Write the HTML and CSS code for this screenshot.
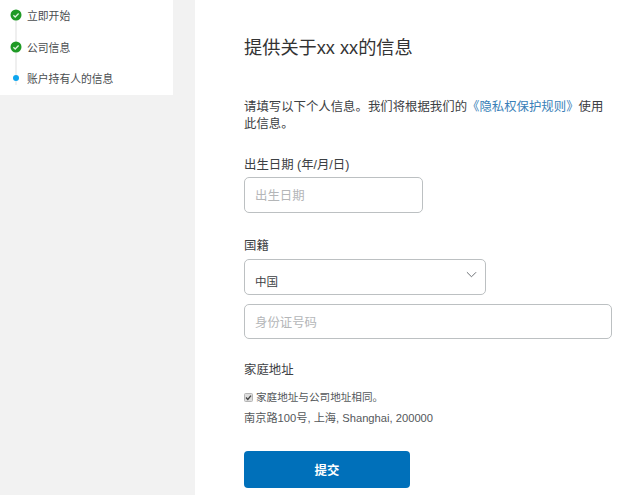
FILE: index.html
```html
<!DOCTYPE html>
<html lang="zh">
<head>
<meta charset="utf-8">
<title>提供关于xx xx的信息</title>
<link rel="stylesheet" href="styles.css">
</head>
<body>
<div class="app">
  <nav class="side">
    <ol class="steps">
      <li class="step">
        <span class="mark"><svg class="check" viewBox="0 0 12 12"><circle cx="6" cy="6" r="5.5" fill="#1f9a25"/><path d="M3.4 6.2 5.2 8 8.6 4.5" fill="none" stroke="#dff3df" stroke-width="1.3"/></svg></span>
        <span>立即开始</span>
      </li>
      <li class="step">
        <span class="mark"><svg class="check" viewBox="0 0 12 12"><circle cx="6" cy="6" r="5.5" fill="#1f9a25"/><path d="M3.4 6.2 5.2 8 8.6 4.5" fill="none" stroke="#dff3df" stroke-width="1.3"/></svg></span>
        <span>公司信息</span>
      </li>
      <li class="step">
        <span class="mark"><span class="dot"></span></span>
        <span>账户持有人的信息</span>
      </li>
    </ol>
  </nav>
  <main class="main">
    <h1 class="title">提供关于xx xx的信息</h1>
    <p class="intro">请填写以下个人信息。我们将根据我们的<a class="link" href="#">《隐私权保护规则》</a>使用此信息。</p>
    <div class="field dob">
      <label class="label">出生日期 (年/月/日)</label>
      <div class="input short"><span class="ph">出生日期</span></div>
    </div>
    <div class="field nation">
      <label class="label">国籍</label>
      <div class="input select"><span class="val">中国</span>
        <svg class="chev" viewBox="0 0 12 7"><path d="M1 1 6 6 11 1" fill="none" stroke="#5f6468" stroke-width="1"/></svg>
      </div>
      <div class="input wide"><span class="ph">身份证号码</span></div>
    </div>
    <div class="addr">
      <div class="label">家庭地址</div>
      <div class="same"><svg class="box" viewBox="0 0 9 9"><rect x="0.5" y="0.5" width="8" height="8" rx="1" fill="#dedede" stroke="#b5b5b5"/><path d="M2 4.6 3.8 6.4 7 2.6" fill="none" stroke="#444" stroke-width="1.4"/></svg><span>家庭地址与公司地址相同。</span></div>
      <div class="line">南京路100号, 上海, Shanghai, 200000</div>
    </div>
    <button class="submit" type="button">提交</button>
  </main>
</div>
</body>
</html>
```
FILE: styles.css
```css
* { box-sizing: border-box; }
html, body { margin: 0; height: 100%; }
body {
  background: #f2f2f2;
  color: #3c4043;
  font-family: "Liberation Sans", "Noto Sans CJK SC", sans-serif;
  overflow: hidden;
}
.app { display: flex; height: 495px; align-items: flex-start; }
.side { width: 173px; height: 95px; background: #fff; margin-right: 22px; flex: none; }
.steps { list-style: none; margin: 0; padding: 0; position: relative; top: -0.5px; }
.steps::before {
  content: ""; position: absolute; left: 15px; top: 10px; width: 2px; height: 75px; background: #efefef;
}
.step { height: 31.5px; display: flex; align-items: center; font-size: 10.8px; color: #4a4d50; }
.mark { width: 27px; padding-left: 10px; display: flex; align-items: center; flex: none; position: relative; }
.check { width: 12px; height: 12px; display: block; }
.dot { width: 6px; height: 6px; border-radius: 50%; background: #0ea5ee; margin-left: 3px; }
.main { flex: 1; height: 495px; background: #fff; padding: 37px 0 0 49px; }
.title { margin: 0; font-weight: 400; font-size: 18.2px; line-height: 22px; color: #333; }
.intro { margin: 40px 0 0; width: 366px; font-size: 12.4px; line-height: 17px; color: #3c4043; }
.link { color: #3a7fb8; text-decoration: none; }
.field { display: block; }
.dob { margin-top: 24px; }
.nation { margin-top: 25px; }
.label { display: block; font-size: 12.4px; line-height: 16px; color: #3c4043; }
.input {
  border: 1px solid #bcc0c2; border-radius: 5px; background: #fff; display: flex; align-items: center;
  font-size: 12.4px; padding-left: 10px; position: relative;
}
.short { width: 179px; height: 36px; margin-top: 4px; }
.select { width: 242px; height: 36px; margin-top: 5px; padding-top: 8px; }
.wide { width: 368px; height: 35px; margin-top: 9px; }
.ph { color: #b4b6b8; }
.val { color: #3c4043; font-size: 11.5px; }
.chev { position: absolute; right: 8px; top: 11px; width: 11px; height: 7px; }
.addr { margin-top: 23px; }
.same { display: flex; align-items: center; margin-top: 12px; font-size: 10.6px; line-height: 14px; color: #55585b; }
.box { width: 9px; height: 9px; margin: 0 3px 0 0; flex: none; }
.line { margin-top: 7px; font-size: 11.2px; line-height: 14px; color: #55585b; }
.submit {
  display: block; margin-top: 26px; width: 166px; height: 37px; border: 0; border-radius: 4px;
  background: #0070ba; color: #fff; font-family: inherit; font-size: 12.4px; font-weight: 700;
}
```
